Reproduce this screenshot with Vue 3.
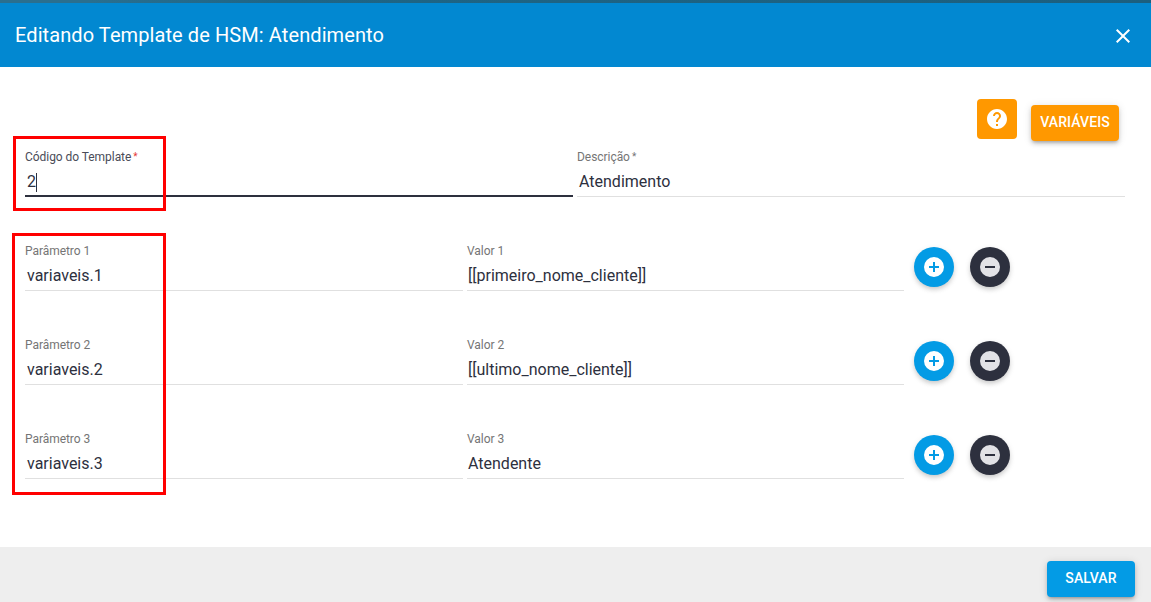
<template>
  <div class="dialog">
    <div class="top-strip"></div>
    <header class="title-bar">
      <span class="title">Editando Template de HSM: Atendimento</span>
      <button class="close-btn" aria-label="Fechar">
        <svg width="24" height="24" viewBox="0 0 24 24">
          <path fill="#fff" d="M19 6.41 17.59 5 12 10.59 6.41 5 5 6.41 10.59 12 5 17.59 6.41 19 12 13.41 17.59 19 19 17.59 13.41 12z" />
        </svg>
      </button>
    </header>

    <main class="content">
      <div class="actions">
        <button class="help-btn" aria-label="Ajuda">
          <svg width="24" height="24" viewBox="0 0 24 24">
            <path fill="#fff" d="M12 2C6.48 2 2 6.48 2 12s4.48 10 10 10 10-4.48 10-10S17.52 2 12 2zm1 17h-2v-2h2v2zm2.07-7.75-.9.92C13.45 12.9 13 13.5 13 15h-2v-.5c0-1.1.45-2.1 1.17-2.83l1.24-1.26c.37-.36.59-.86.59-1.41 0-1.1-.9-2-2-2s-2 .9-2 2H8c0-2.21 1.79-4 4-4s4 1.79 4 4c0 .88-.36 1.68-.93 2.25z" />
          </svg>
        </button>
        <button class="vars-btn">VARIÁVEIS</button>
      </div>

      <div class="main-row">
        <div class="field focused">
          <label>Código do Template<i>*</i></label>
          <div class="value">2<span class="caret"></span></div>
        </div>
        <div class="field">
          <label>Descrição<i>*</i></label>
          <div class="value">Atendimento</div>
        </div>
      </div>

      <div v-for="(p, i) in params" :key="i" class="param-row">
        <div class="field">
          <label>Parâmetro {{ i + 1 }}</label>
          <div class="value">{{ p.name }}</div>
        </div>
        <div class="field">
          <label>Valor {{ i + 1 }}</label>
          <div class="value">{{ p.value }}</div>
        </div>
        <button class="round add" aria-label="Adicionar">
          <svg width="24" height="24" viewBox="0 0 24 24">
            <path fill="#fff" fill-rule="evenodd" d="M12 2a10 10 0 1 0 0 20 10 10 0 0 0 0-20zm5 11h-4v4h-2v-4H7v-2h4V7h2v4h4z" />
          </svg>
        </button>
        <button class="round remove" aria-label="Remover">
          <svg width="24" height="24" viewBox="0 0 24 24">
            <path fill="#e2e2e6" fill-rule="evenodd" d="M12 2a10 10 0 1 0 0 20 10 10 0 0 0 0-20zm5 11H7v-2h10z" />
          </svg>
        </button>
      </div>

      <div class="mark mark-code"></div>
      <div class="mark mark-params"></div>
    </main>

    <footer class="bottom-bar">
      <button class="save-btn">SALVAR</button>
    </footer>
  </div>
</template>

<script setup>
const params = [
  { name: "variaveis.1", value: "[[primeiro_nome_cliente]]" },
  { name: "variaveis.2", value: "[[ultimo_nome_cliente]]" },
  { name: "variaveis.3", value: "Atendente" },
];
</script>

<style>
html,
body {
  margin: 0;
  background: #fff;
}
</style>

<style scoped>
.dialog {
  width: 1151px;
  height: 602px;
  display: flex;
  flex-direction: column;
  overflow: hidden;
  font-family: Roboto, "Liberation Sans", sans-serif;
  color: #2d303e;
}
.top-strip {
  height: 3px;
  background: linear-gradient(90deg, #2a6f8f 0, #2a6f8f 90px, #1f6585 280px, #1c5f7e 100%);
}
.title-bar {
  height: 64px;
  background: #0288d1;
  display: flex;
  align-items: center;
  justify-content: space-between;
  padding: 0 16px 0 15px;
}
.title {
  color: #fff;
  font-size: 20px;
  font-weight: 400;
  letter-spacing: 0.09px;
}
.close-btn {
  width: 24px;
  height: 24px;
  padding: 0;
  border: none;
  background: none;
  position: relative;
  top: 1px;
}
.content {
  flex: 1;
  position: relative;
  padding: 32px 26px 0 25px;
}
.actions {
  height: 42px;
  display: flex;
  justify-content: flex-end;
  align-items: flex-start;
  gap: 14px;
  padding-right: 6px;
}
.help-btn {
  width: 40px;
  height: 40px;
  padding: 0;
  border: none;
  border-radius: 4px;
  background: #ff9800;
  display: flex;
  align-items: center;
  justify-content: center;
}
.vars-btn,
.save-btn {
  width: 88px;
  height: 36px;
  padding: 0 0 2px;
  border: none;
  border-radius: 4px;
  color: #fff;
  font-family: inherit;
  font-size: 14px;
  font-weight: 500;
  letter-spacing: 0.1px;
  box-shadow: 0 3px 3px -2px rgba(0, 0, 0, 0.2), 0 3px 4px rgba(0, 0, 0, 0.14), 0 1px 8px rgba(0, 0, 0, 0.12);
}
.vars-btn {
  margin-top: 6px;
  background: #ff9800;
}
.main-row {
  margin-top: 8px;
  display: flex;
  gap: 4px;
}
.main-row .field {
  width: 548px;
}
.param-row {
  display: flex;
  align-items: flex-start;
  margin-top: 46px;
}
.param-row .field {
  width: 438px;
  margin-right: 4px;
}
.param-row .field + .field {
  width: 437px;
  margin-right: 10px;
}
.param-row .field + .field .value {
  padding-left: 1px;
}
.field {
  height: 48px;
  box-sizing: border-box;
  border-bottom: 1px solid #e0e0e0;
}
.field.focused {
  border-bottom: 2px solid #2d303e;
}
.field label {
  display: block;
  height: 16px;
  font-size: 12px;
  line-height: 16px;
  letter-spacing: -0.05px;
  color: #757575;
}
.field.focused label {
  color: #4a4c58;
}
.field i {
  font-style: normal;
  font-size: 10px;
  margin-left: 2px;
  vertical-align: 1px;
}
.field.focused i {
  color: #e53935;
}
.value {
  margin-top: 5px;
  padding-left: 2px;
  font-size: 16px;
  line-height: 24px;
  color: #2d303e;
  display: flex;
  align-items: center;
}
.caret {
  width: 1px;
  height: 19px;
  background: #2d303e;
}
.round {
  width: 40px;
  height: 40px;
  padding: 0;
  border: none;
  border-radius: 50%;
  flex: none;
  display: flex;
  align-items: center;
  justify-content: center;
  margin-top: 4px;
  box-shadow: 0 3px 5px -1px rgba(0, 0, 0, 0.16), 0 2px 6px rgba(0, 0, 0, 0.1);
}
.add {
  background: #039be5;
  margin-right: 16px;
}
.remove {
  background: #2d303e;
}
.mark {
  position: absolute;
  box-sizing: border-box;
  border: 3px solid #f00;
  pointer-events: none;
}
.mark-code {
  left: 13px;
  top: 69px;
  width: 153px;
  height: 75px;
}
.mark-params {
  left: 12px;
  top: 166px;
  width: 154px;
  height: 262px;
}
.bottom-bar {
  height: 55px;
  background: #eeeeee;
  display: flex;
  justify-content: flex-end;
  align-items: flex-start;
  padding: 14px 16px 0 0;
  box-sizing: border-box;
}
.save-btn {
  background: #039be5;
}
</style>
